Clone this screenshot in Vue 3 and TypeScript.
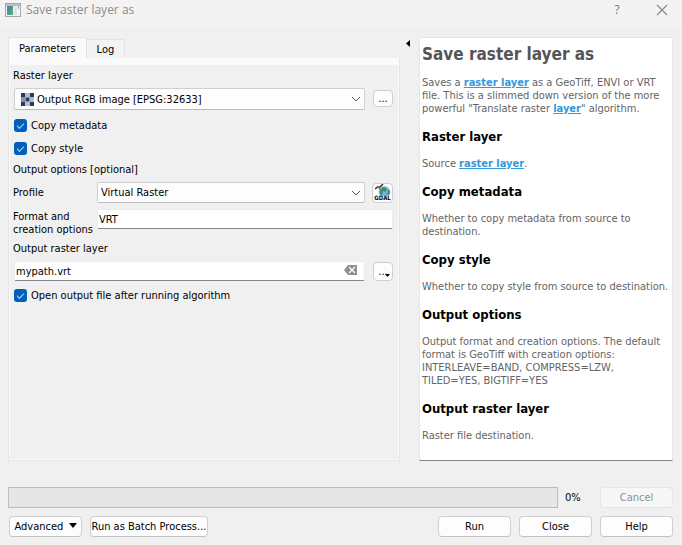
<script setup lang="ts">
import { ref } from 'vue'

interface Section {
  title: string
  before: string
  link?: string
  after?: string
}

const tabs = ['Parameters', 'Log']
const activeTab = ref('Parameters')
const layer = ref('Output RGB image [EPSG:32633]')
const profile = ref('Virtual Raster')
const format = ref('VRT')
const output = ref('mypath.vrt')
const copyMetadata = ref(true)
const copyStyle = ref(true)
const openAfter = ref(true)
const progress = ref(0)

const sections: Section[] = [
  { title: 'Raster layer', before: 'Source ', link: 'raster layer', after: '.' },
  { title: 'Copy metadata', before: 'Whether to copy metadata from source to destination.' },
  { title: 'Copy style', before: 'Whether to copy style from source to destination.' },
  {
    title: 'Output options',
    before:
      'Output format and creation options. The default format is GeoTiff with creation options: INTERLEAVE=BAND, COMPRESS=LZW, TILED=YES, BIGTIFF=YES',
  },
  { title: 'Output raster layer', before: 'Raster file destination.' },
]
</script>

<template>
  <div class="dialog">
    <header class="titlebar">
      <svg class="app-icon" width="16" height="14" viewBox="0 0 16 14">
        <defs>
          <linearGradient id="appFill" x1="0" y1="0" x2="1" y2="1">
            <stop offset="0" stop-color="#4a7fa5" />
            <stop offset="1" stop-color="#58b07c" />
          </linearGradient>
        </defs>
        <rect x="0.5" y="0.5" width="15" height="13" fill="#f4f6f6" stroke="#a3a9ad" />
        <rect x="1" y="1" width="14" height="2" fill="#b9c0c4" />
        <rect x="2" y="3" width="6" height="9" fill="url(#appFill)" />
        <rect x="9" y="3" width="3" height="9" fill="#dfe3e4" />
        <rect x="13" y="3" width="1" height="3" fill="#7fb59a" />
      </svg>
      <h1 class="window-title">Save raster layer as</h1>
      <button class="win-btn" type="button" aria-label="Context help">?</button>
      <button class="win-btn" type="button" aria-label="Close window">
        <svg width="12" height="12" viewBox="0 0 12 12"><path d="M1 1L11 11M11 1L1 11" stroke="#888" stroke-width="1.1" fill="none" /></svg>
      </button>
    </header>

    <main class="content">
      <section class="left">
        <div class="tabs" role="tablist">
          <button
            v-for="t in tabs"
            :key="t"
            class="tab"
            :class="{ active: t === activeTab }"
            type="button"
            role="tab"
            :aria-selected="t === activeTab"
            @click="activeTab = t"
          >{{ t }}</button>
        </div>
        <div class="panel">
          <form class="form" @submit.prevent>
            <label class="caption first" for="layer">Raster layer</label>
            <div class="row">
              <div class="combo tall">
                <svg class="raster-icon" width="13" height="13" viewBox="0 0 13 13" shape-rendering="crispEdges">
                  <rect width="13" height="13" fill="#dbe4f0" />
                  <path d="M0 0h4v4H0zM9 0h4v4H9zM5 5h3v3H5zM0 9h4v4H0zM9 9h4v4H9z" fill="#2c3a52" />
                  <path d="M4 0h5v4H4zM9 4h4v5H9zM4 9h5v4H4z" fill="#a9bfdc" />
                  <path d="M0 4h4v5H0zM4 4h5v1H4zM4 8h5v1H4zM4 5h1v3H4zM8 5h1v3H8z" fill="#7b95ba" />
                </svg>
                <select id="layer" v-model="layer" class="with-icon">
                  <option>Output RGB image [EPSG:32633]</option>
                </select>
                <svg class="chevron" width="10" height="6" viewBox="0 0 10 6"><path d="M1 1L5 5L9 1" stroke="#555" fill="none" /></svg>
              </div>
              <button class="tool short" type="button" aria-label="Browse layer">...</button>
            </div>
            <label class="check"><input v-model="copyMetadata" type="checkbox" />Copy metadata</label>
            <label class="check"><input v-model="copyStyle" type="checkbox" />Copy style</label>
            <p class="caption options">Output options [optional]</p>
            <div class="row profile">
              <label class="side" for="profile">Profile</label>
              <div class="combo">
                <select id="profile" v-model="profile"><option>Virtual Raster</option></select>
                <svg class="chevron" width="10" height="6" viewBox="0 0 10 6"><path d="M1 1L5 5L9 1" stroke="#555" fill="none" /></svg>
              </div>
              <button class="tool gdal" type="button" aria-label="GDAL driver help">
                <svg width="16" height="12" viewBox="0 0 16 12">
                  <circle cx="9.500" cy="8" r="5.800" fill="#69b9e0" />
                  <path d="M5 6L8 3L11 4L12 6L10 8L8 7L7 11L5 10ZM13 6L15 7L14 11L12 10Z" fill="#4b8b61" />
                  <path d="M0 5L3 3L5 3L8 0" stroke="#333" stroke-width="1.500" fill="none" />
                  <path d="M2 2L5 5" stroke="#777" stroke-width="1.500" />
                </svg>
                <span>GDAL</span>
              </button>
            </div>
            <div class="row format">
              <label class="side" for="format">Format and creation options</label>
              <input id="format" v-model="format" class="text" type="text" />
            </div>
            <label class="caption" for="output">Output raster layer</label>
            <div class="row output">
              <div class="clearable">
                <input id="output" v-model="output" class="text" type="text" />
                <button class="clear" type="button" aria-label="Clear" @click="output = ''">
                  <svg width="13" height="10" viewBox="0 0 13 10">
                    <path d="M4 0H13V10H4L0 5Z" fill="#8f8f8f" />
                    <path d="M5 2L11 8M11 2L5 8" stroke="#fff" stroke-width="1.2" />
                  </svg>
                </button>
              </div>
              <button class="tool" type="button" aria-label="Output destination">...<svg class="drop" width="5" height="3" viewBox="0 0 5 3"><path d="M0 0H5L2.5 3Z" /></svg></button>
            </div>
            <label class="check"><input v-model="openAfter" type="checkbox" />Open output file after running algorithm</label>
          </form>
        </div>
      </section>

      <button class="collapse" type="button" aria-label="Hide help">
        <svg width="4" height="7" viewBox="0 0 4 7"><path d="M4 0V7L0 3.500Z" /></svg>
      </button>

      <aside class="help">
        <h2>Save raster layer as</h2>
        <p>Saves a <a href="#layer">raster layer</a> as a GeoTiff, ENVI or VRT file. This is a slimmed down version of the more powerful "Translate raster <a href="#layer">layer</a>" algorithm.</p>
        <template v-for="s in sections" :key="s.title">
          <h3>{{ s.title }}</h3>
          <p>{{ s.before }}<a v-if="s.link" href="#layer">{{ s.link }}</a>{{ s.after }}</p>
        </template>
      </aside>
    </main>

    <footer class="footer">
      <div class="line">
        <div class="progress" role="progressbar" :aria-valuenow="progress"><div class="bar" :style="{ width: progress + '%' }"></div></div>
        <span class="percent">{{ progress }}%</span>
        <button class="btn" type="button" disabled>Cancel</button>
      </div>
      <div class="line actions">
        <button class="btn advanced" type="button">Advanced <svg width="8" height="5" viewBox="0 0 8 5"><path d="M0 0H8L4 5Z" /></svg></button>
        <button class="btn batch" type="button">Run as Batch Process...</button>
        <span class="spacer"></span>
        <button class="btn" type="button">Run</button>
        <button class="btn" type="button">Close</button>
        <button class="btn" type="button">Help</button>
      </div>
    </footer>
  </div>
</template>

<style>
body {
  background: #f0f0f0;
}
</style>

<style scoped>
* {
  box-sizing: border-box;
}
.dialog {
  min-height: 100vh;
  display: flex;
  flex-direction: column;
  background: #f0f0f0;
  color: #000;
  font: 11px/13px Tahoma, "DejaVu Sans Condensed", "Noto Sans", sans-serif;
}
button,
input,
select {
  font: inherit;
  color: inherit;
  margin: 0;
}
p,
h1,
h2,
h3 {
  margin: 0;
}
.titlebar {
  height: 26px;
  padding: 0 0 6px 5px;
  display: flex;
  align-items: center;
  background: #f3f3f3;
}
.window-title {
  flex: 1;
  margin-left: 5px;
  font: 12px/16px "Segoe UI", "Open Sans", sans-serif;
  color: #8c8c8c;
}
.win-btn {
  width: 50px;
  height: 20px;
  padding: 0;
  border: 0;
  background: none;
  color: #777;
  font: 12px/20px "Open Sans", sans-serif;
}
.win-btn:last-child {
  width: 40px;
}
.win-btn svg {
  display: block;
  margin: 0 auto;
}
.content {
  flex: 1;
  display: grid;
  grid-template-columns: minmax(0, 392fr) 19px minmax(0, 254fr);
  padding: 11px 9px 0 8px;
}
.left {
  display: flex;
  flex-direction: column;
}
.tabs {
  display: flex;
  align-items: flex-end;
  height: 21px;
}
.tab {
  height: 19px;
  padding: 0 10px;
  border: 1px solid #e3e3e3;
  border-left: 0;
  border-bottom: 0;
  background: #f3f3f3;
}
.tab.active {
  height: 21px;
  border-left: 1px solid #e3e3e3;
  background: #fafafa;
}
.panel {
  flex: 1;
  border: 1px solid #e4e4e4;
  border-top: 0;
  background: #fafafa;
  padding: 7px 1px 1px;
  display: flex;
}
.form {
  flex: 1;
  min-width: 0;
  background: #f0f0f0;
  padding: 4px 5px 0 3px;
  display: flex;
  flex-direction: column;
}
.caption {
  height: 13px;
  margin-top: 6px;
}
.caption.first {
  margin-top: 0;
}
.caption.options {
  margin-top: 8px;
}
.row {
  display: flex;
  align-items: center;
  gap: 8px;
  margin: 6px 0 0 1px;
}
.combo {
  position: relative;
  flex: 1;
  min-width: 0;
  height: 21px;
  display: flex;
  align-items: center;
  background: #fdfdfd;
  border: 1px solid #cfcfcf;
  border-bottom-color: #bcbcbc;
  border-radius: 2px;
}
.combo.tall {
  height: 22px;
}
.combo select {
  flex: 1;
  min-width: 0;
  height: 100%;
  padding: 0 18px 0 3px;
  border: 0;
  background: none;
  appearance: none;
}
.raster-icon {
  margin-left: 6px;
}
.chevron {
  position: absolute;
  right: 3px;
  top: 7px;
  pointer-events: none;
}
.tool {
  position: relative;
  flex: none;
  width: 20px;
  height: 19px;
  padding: 0;
  border: 1px solid #cfcfcf;
  border-radius: 4px;
  background: #fdfdfd;
}
.tool.short {
  height: 17px;
  margin-bottom: 2px;
}
.tool.gdal {
  width: 21px;
  height: 20px;
  display: flex;
  flex-direction: column;
  align-items: center;
}
.gdal svg {
  flex: none;
}
.gdal span {
  margin-top: -1px;
  font: bold 6px/6px "DejaVu Sans Condensed", sans-serif;
}
.drop {
  position: absolute;
  right: 2px;
  bottom: 3px;
}
.check {
  display: flex;
  align-items: center;
  gap: 4px;
  height: 13px;
  margin: 9px 0 0 1px;
}
.check + .check {
  margin-top: 10px;
}
.output + .check {
  margin-top: 8px;
}
.check input {
  appearance: none;
  width: 13px;
  height: 13px;
  border-radius: 3px;
  background: #005fb8;
  display: grid;
  place-items: center;
}
.check input::before {
  content: "";
  width: 6px;
  height: 3px;
  margin-bottom: 2px;
  border: solid #b8d4ee;
  border-width: 0 0 1px 1px;
  transform: rotate(-45deg);
}
.check input:not(:checked) {
  background: #fff;
}
.side {
  width: 84px;
  flex: none;
}
.profile,
.format {
  gap: 0;
  margin-left: 0;
}
.profile .tool {
  margin-left: 7px;
}
.text {
  flex: 1;
  width: 100%;
  min-width: 0;
  height: 20px;
  padding: 0 1px;
  border: 1px solid #ececec;
  border-bottom-color: #868686;
  border-radius: 2px;
  background: #fff;
}
.row.format {
  align-items: flex-start;
}
.format .side {
  padding-top: 1px;
}
.clearable {
  position: relative;
  flex: 1;
  display: flex;
}
.clear {
  position: absolute;
  right: 8px;
  top: 4px;
  height: 10px;
  padding: 0;
  border: 0;
  background: none;
}
.clear svg {
  display: block;
}
.collapse {
  width: 19px;
  height: 11px;
  padding: 2px 0 0 6px;
  border: 0;
  background: none;
  text-align: left;
}
.collapse svg {
  display: block;
}
.help {
  padding: 6px 0 0 2px;
  background: #fff;
  border: 1px solid #e6e6e6;
  border-bottom-color: #868686;
  color: #646464;
}
.help h2 {
  font-size: 17px;
  line-height: 21px;
  margin-bottom: 11px;
  color: #555;
}
.help h3 {
  font-size: 13px;
  line-height: 17px;
  margin: 13px 0 12px;
  color: #000;
}
.help a {
  color: #3498db;
  font-weight: bold;
}
.footer {
  padding: 26px 9px 8px 8px;
}
.line {
  display: flex;
  align-items: center;
}
.progress {
  flex: 1;
  height: 21px;
  border: 1px solid #bcbcbc;
  background: #e6e6e6;
}
.bar {
  height: 100%;
  background: #06b025;
}
.percent {
  width: 42px;
  padding-left: 7px;
}
.btn {
  width: 73px;
  height: 21px;
  padding: 0;
  border: 1px solid #d0d0d0;
  border-bottom-color: #c2c2c2;
  border-radius: 4px;
  background: #fdfdfd;
  white-space: nowrap;
}
.btn:disabled {
  color: #8f8f8f;
  background: #f7f7f7;
  border-color: #e5e5e5;
}
.actions {
  gap: 8px;
  margin-top: 8px;
  padding-left: 1px;
}
.advanced svg {
  margin: 0 0 2px 2px;
}
.batch {
  width: 118px;
}
.spacer {
  flex: 1;
}
</style>
